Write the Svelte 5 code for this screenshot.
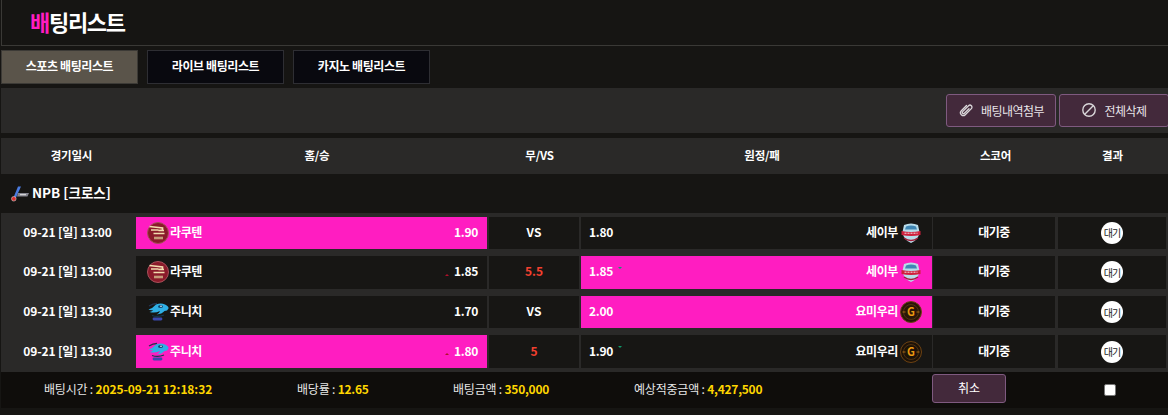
<script>
  const columns = ['경기일시', '홈/승', '무/VS', '원정/패', '스코어', '결과'];

  const rows = [
    { date: '09-21 [일] 13:00', home: '라쿠텐', homeLogo: 'rakuten', homeOdd: '1.90', mid: 'VS', away: '세이부', awayLogo: 'seibu', awayOdd: '1.80', pick: 'home' },
    { date: '09-21 [일] 13:00', home: '라쿠텐', homeLogo: 'rakuten', homeOdd: '1.85', mid: '5.5', away: '세이부', awayLogo: 'seibu', awayOdd: '1.85', pick: 'away', up: true, down: true },
    { date: '09-21 [일] 13:30', home: '주니치', homeLogo: 'chunichi', homeOdd: '1.70', mid: 'VS', away: '요미우리', awayLogo: 'yomiuri', awayOdd: '2.00', pick: 'away' },
    { date: '09-21 [일] 13:30', home: '주니치', homeLogo: 'chunichi', homeOdd: '1.80', mid: '5', away: '요미우리', awayLogo: 'yomiuri', awayOdd: '1.90', pick: 'home', up: true, down: true, dim: true }
  ];
</script>

{#snippet logo(name, dim)}
  <svg class="logo" viewBox="0 0 22 22" aria-hidden="true">
    {#if name === 'rakuten'}
      <circle cx="11" cy="11" r="10.500" fill="#8a1a2a" stroke="#a8505a" />
      <path d="M2.500 4.500l13 1.500v2l-4 .5h5.500M4 8h7.500M6.500 11.500h11" fill="none" stroke="#f2dcae" stroke-width="1.700" />
      <path d="M7 16h9" stroke="#c49a78" stroke-width="2.600" />
    {:else if name === 'seibu'}
      <path d="M4 3q7-3 14 0l1.500 7q-1 8-8.500 11-7.500-3-8.500-11z" fill="#b8dcea" />
      <path d="M6 4.500q5-2 10 0l1 3H5z" fill="#3f86b4" />
      <path d="M1.500 9q9.500 2 19 0v4q-9.500 2-19 0z" fill="#cf1f3c" />
      <path d="M4.500 11.200h13" stroke="#f7dfe4" stroke-width="1" stroke-dasharray="2 1" />
      <path d="M4 16q7 5 14 0" fill="none" stroke="#a31a35" stroke-width="1.500" />
    {:else if name === 'chunichi'}
      <path d="M2 5q4-2.500 8-2.500" stroke="#26324f" stroke-width="1.300" fill="none" />
      <path d="M9 3.500q5-2 9 0t3.500 4q-1 2.500-4 2.500-2.500 3-8 3.500 3-1.500 3.500-3.500-5 2.500-10.500 1 3-.5 3.500-2-2.500.5-4.500-.5 4-1 7.500-5z" fill="#2fb0e6" />
      <ellipse cx="13.500" cy="5.500" rx="2.500" ry="1.500" fill="#124a72" />
      <circle cx="14" cy="5.200" r=".8" fill="#fff" />
      <path d="M5 14.500q6 2 12-.5" fill="none" stroke="#14384f" stroke-width="1.200" />
      <path d="M7 18h7" stroke="#3b48ad" stroke-width="2.800" stroke-linecap="round" />
    {:else}
      <circle cx="11" cy="11" r="10.500" fill={dim ? '#1c1208' : '#2a1607'} stroke="#6e4212" />
      <circle cx="11" cy="11" r="7.500" fill="none" stroke="#5c3810" stroke-width="0.800" />
      <text x="11" y="15" text-anchor="middle" font-size="11" font-weight="700" fill="#ec9a10">G</text>
      <path d="M2.500 11h3M16.500 11h3" stroke="#a86c14" stroke-width="1" />
    {/if}
  </svg>
{/snippet}

<div class="page">
  <div class="title"><h1><span>배</span>팅리스트</h1></div>

  <div class="tabs">
    <button class="tab active">스포츠 배팅리스트</button>
    <button class="tab">라이브 배팅리스트</button>
    <button class="tab">카지노 배팅리스트</button>
  </div>

  <div class="toolbar">
    <button class="action">
      <svg viewBox="0 0 16 16" aria-hidden="true"><path d="M5.200 4.500v7.300a2.800 2.800 0 0 0 5.600 0V3.200a2 2 0 0 0-4 0v8.300a1.200 1.200 0 0 0 2.400 0V5" transform="rotate(45 8 8)" fill="none" stroke="#d9d6d9" stroke-width="1.300" stroke-linecap="round" /></svg>
      배팅내역첨부
    </button>
    <button class="action">
      <svg viewBox="0 0 16 16" aria-hidden="true"><circle cx="8" cy="8" r="6.200" fill="none" stroke="#d9d6d9" stroke-width="1.400" /><path d="M3.800 12.200l8.400-8.400" stroke="#d9d6d9" stroke-width="1.400" /></svg>
      전체삭제
    </button>
  </div>

  <div class="head">
    {#each columns as col}
      <div>{col}</div>
    {/each}
  </div>

  <div class="league">
    <svg viewBox="0 0 20 16" aria-hidden="true">
      <path d="M8 .5h3L6 11.500H3.500z" fill="#4a7be0" />
      <path d="M8 7h11l-1.500 3.500H7z" fill="#85858f" />
      <path d="M10 8.700h6" stroke="#e4e4e4" stroke-width="1" />
      <circle cx="3.800" cy="12.800" r="2.300" fill="#d8302f" stroke="#eee" stroke-width=".5" />
    </svg>
    NPB [크로스]
  </div>

  {#each rows as row}
    <div class="grid row">
      <div class="date">{row.date}</div>
      <div class="cell team home" class:picked={row.pick === 'home'}>
        {@render logo(row.homeLogo, false)}
        <span class="name">{row.home}</span>
        {#if row.up}<i class="up"></i>{/if}
        <span class="odd">{row.homeOdd}</span>
      </div>
      <div class="cell mid" class:line={row.mid !== 'VS'}>{row.mid}</div>
      <div class="cell team away" class:picked={row.pick === 'away'}>
        <span class="odd">{row.awayOdd}</span>
        {#if row.down}<i class="down"></i>{/if}
        <span class="name end">{row.away}</span>
        {@render logo(row.awayLogo, row.dim)}
      </div>
      <div class="cell center score">대기중</div>
      <div class="cell center result"><span class="badge">대기</span></div>
    </div>
  {/each}

  <div class="summary">
    <div class="stat s1">배팅시간 : <b>2025-09-21 12:18:32</b></div>
    <div class="stat s2">배당률 : <b>12.65</b></div>
    <div class="stat s3">배팅금액 : <b>350,000</b></div>
    <div class="stat s4">예상적중금액 : <b>4,427,500</b></div>
    <button class="cancel">취소</button>
    <input class="check" type="checkbox" />
  </div>
</div>

<style>
  :global(body) {
    margin: 0;
    background: #161513;
  }

  .page {
    width: 1168px;
    height: 415px;
    overflow: hidden;
    box-sizing: border-box;
    padding-left: 1px;
    font-family: "Noto Sans CJK KR", "Noto Sans", sans-serif;
    color: #fff;
    font-size: 12px;
    font-weight: 700;
  }

  .title {
    height: 46px;
    box-sizing: border-box;
    border-left: 1px solid #3a3936;
    border-bottom: 1px solid #3a3936;
    padding-left: 28px;
    display: flex;
    align-items: center;
  }

  h1 {
    margin: 0 0 4px;
    font-size: 22px;
    font-weight: 700;
    line-height: 1;
    letter-spacing: -1.300px;
  }

  h1 span {
    color: #ff1dc1;
  }

  .tabs {
    display: flex;
    gap: 9px;
    margin-top: 4px;
  }

  button {
    font-family: inherit;
    font-weight: inherit;
    color: #fff;
    cursor: pointer;
  }

  .tab {
    width: 137px;
    height: 34px;
    padding: 0 0 4px;
    font-size: 12px;
    background: #09090f;
    border: 1px solid #2e2e33;
    letter-spacing: -0.400px;
  }

  .tab.active {
    background: #5a544a;
    border-color: #3c3a36;
  }

  .toolbar {
    height: 45px;
    margin-top: 4px;
    box-sizing: border-box;
    background: #2a2928;
    display: flex;
    justify-content: flex-end;
    align-items: flex-start;
    gap: 3px;
    padding-top: 6px;
    margin-right: -1px;
  }

  .action {
    width: 110px;
    height: 33px;
    padding: 0 0 1px;
    display: flex;
    align-items: center;
    justify-content: center;
    gap: 7px;
    background: #43293b;
    border: 1px solid #7f5a80;
    border-radius: 3px;
    font-size: 12px;
    font-weight: 400;
    color: #e8e4e8;
    letter-spacing: -0.500px;
  }

  .action svg {
    width: 16px;
    height: 16px;
  }

  .head {
    display: grid;
    grid-template-columns: 141px 350px 95px 350px 117px 117px;
    height: 36px;
    margin-top: 5px;
    background: #2a2928;
    align-items: center;
    text-align: center;
    font-size: 11.500px;
    letter-spacing: -0.200px;
    padding-bottom: 2px;
    box-sizing: border-box;
  }

  .league {
    height: 39px;
    display: flex;
    align-items: center;
    gap: 2px;
    padding-left: 9px;
    font-size: 13.500px;
    padding-bottom: 4px;
    box-sizing: border-box;
  }

  .league svg {
    width: 20px;
    height: 16px;
    margin-top: 4px;
  }

  .grid {
    display: grid;
    grid-template-columns: 133px 351px 90px 351px 121px 109px;
    column-gap: 2px;
  }

  .row {
    height: 39.670px;
    box-sizing: border-box;
    padding: 3.500px 0;
    background: #2a2928;
  }

  .date {
    display: flex;
    align-items: center;
    justify-content: center;
    font-size: 12px;
    letter-spacing: -0.150px;
    padding-bottom: 3px;
  }

  .cell {
    display: flex;
    align-items: center;
    background: #171614;
    font-size: 12px;
    padding-bottom: 3px;
    box-sizing: border-box;
  }

  .team {
    gap: 1px;
  }

  .home {
    padding-left: 11px;
    padding-right: 9px;
  }

  .away {
    padding-left: 8px;
    padding-right: 10px;
  }

  .team.picked {
    background: #ff1dc1;
  }

  .logo {
    width: 22px;
    height: 22px;
    flex: none;
    margin-top: 3px;
  }

  .name {
    flex: 1;
    letter-spacing: -0.400px;
  }

  .name.end {
    text-align: right;
    margin-right: 1px;
  }

  .odd {
    letter-spacing: -0.300px;
  }

  .up {
    width: 0;
    height: 0;
    margin-right: 4px;
    margin-top: 8px;
    border: 2px solid transparent;
    border-top: 0;
    border-bottom: 2px solid #b0102a;
  }

  .down {
    width: 0;
    height: 0;
    margin-left: 4px;
    margin-bottom: 6px;
    border: 2px solid transparent;
    border-bottom: 0;
    border-top: 2px solid #0f9a6a;
  }

  .mid,
  .center {
    justify-content: center;
  }

  .mid.line {
    color: #f2402f;
  }

  .score {
    margin-left: -1px;
    letter-spacing: -0.500px;
  }

  .result {
    margin-left: 1px;
  }

  .badge {
    width: 22px;
    height: 22px;
    margin-top: 3px;
    border-radius: 50%;
    background: #fff;
    color: #222;
    font-size: 10px;
    font-weight: 400;
    letter-spacing: -1px;
    display: flex;
    align-items: center;
    justify-content: center;
  }

  .summary {
    height: 36px;
    background: #0f0d0b;
    display: flex;
    align-items: center;
    font-weight: 400;
  }

  .stat {
    color: #e6e6e6;
    white-space: nowrap;
    letter-spacing: -0.200px;
    padding-bottom: 3px;
  }

  .stat b {
    color: #ffd600;
    font-weight: 700;
    letter-spacing: -0.250px;
  }

  .s1 {
    margin-left: 43px;
    width: 253px;
  }

  .s1 b {
    letter-spacing: -0.100px;
  }

  .s2 {
    width: 156px;
  }

  .s3 {
    width: 181px;
  }

  .s4 {
    width: 298px;
  }

  .cancel {
    width: 74px;
    height: 29px;
    padding: 0 0 2px;
    background: #43293b;
    border: 1px solid #7f5a80;
    border-radius: 3px;
    font-size: 12px;
    font-weight: 400;
    margin-bottom: 3px;
  }

  .check {
    width: 12px;
    height: 12px;
    margin: 0 0 0 98px;
    appearance: none;
    background: #fff;
    border: 1px solid #777;
    border-radius: 2px;
  }
</style>
